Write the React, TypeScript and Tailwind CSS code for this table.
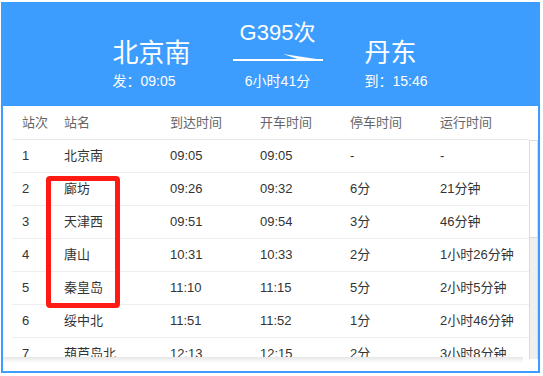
import React from "react";

const rows = [
  ["1", "北京南", "09:05", "09:05", "-", "-"],
  ["2", "廊坊", "09:26", "09:32", "6分", "21分钟"],
  ["3", "天津西", "09:51", "09:54", "3分", "46分钟"],
  ["4", "唐山", "10:31", "10:33", "2分", "1小时26分钟"],
  ["5", "秦皇岛", "11:10", "11:15", "5分", "2小时5分钟"],
  ["6", "绥中北", "11:51", "11:52", "1分", "2小时46分钟"],
  ["7", "葫芦岛北", "12:13", "12:15", "2分", "3小时8分钟"],
];

const widths = ["w-[42px]", "w-[106px]", "w-[90px]", "w-[90px]", "w-[90px]", "w-[99px]"];

export default function App() {
  return (
    <div
      className="relative w-[543px] h-[376px] bg-white overflow-hidden pt-[2px] pl-[1px]"
      style={{ fontFamily: '"Liberation Sans", "Noto Sans CJK SC", sans-serif' }}
    >
      <div className="w-[539px] h-[371px] border-l-[2px] border-r-[2px] border-b-[2px] border-[#3d9dfe] flex flex-col">
        {/* Header */}
        <div className="h-[104px] bg-[#3d9dfe] flex justify-center items-start text-white">
          <div className="w-[78px] mt-[36px] flex flex-col">
            <div className="text-[26px] leading-[30px]">北京南</div>
            <div className="text-[14px] leading-[18px] mt-[4px]">发：09:05</div>
          </div>
          <div className="w-[90px] ml-[42px] mt-[18px] flex flex-col items-center">
            <div className="text-[22px] leading-[26px]">G395次</div>
            <svg width="90" height="8" viewBox="0 0 90 8" className="mt-[8px]">
              <rect x="0" y="5" width="90" height="2" fill="#fff" />
              <polygon points="50,0 90,6 90,7 66,5.5" fill="#fff" />
            </svg>
            <div className="text-[14px] leading-[18px] mt-[10px]">6小时41分</div>
          </div>
          <div className="w-[64px] ml-[42px] mt-[36px] flex flex-col">
            <div className="text-[26px] leading-[30px]">丹东</div>
            <div className="text-[14px] leading-[18px] mt-[4px]">到：15:46</div>
          </div>
        </div>
        {/* Table */}
        <div className="flex-1 bg-white pl-[9px] flex flex-col">
          <div className="flex h-[34px] w-[517px] border-b border-[#e8e8e8] items-center text-[13px] text-[#666]">
            {["站次", "站名", "到达时间", "开车时间", "停车时间", "运行时间"].map((h, i) => (
              <div key={i} className={`${widths[i]} pl-[10px] shrink-0`}>
                {h}
              </div>
            ))}
          </div>
          <div className="flex h-[219px]">
            <div className="relative w-[517px] h-[219px]">
              <div className="w-[517px] h-[218px] overflow-hidden">
                {rows.map((r, ri) => (
                  <div key={ri} className="flex h-[33px] border-b border-[#eeeeee] items-center text-[13px] text-[#333]">
                    {r.map((c, i) => (
                      <div key={i} className={`${widths[i]} pl-[10px] shrink-0 whitespace-nowrap`}>
                        {c}
                      </div>
                    ))}
                  </div>
                ))}
              </div>
              <div className="absolute left-[-9px] top-[217px] w-[520px] h-[6px] bg-gradient-to-b from-[#e6e6e6] to-white" />
            </div>
            <div className="w-[9px] h-[219px] flex flex-col border-l border-t border-r border-[#dcdcdc] bg-[#f0f0f0]">
              <div className="h-[97px] bg-white border-b border-[#dcdcdc]" />
            </div>
          </div>
        </div>
      </div>
      {/* Red highlight */}
      <div className="absolute left-[46px] top-[176px] w-[74px] h-[132px] border-[5px] border-[#ff1a14] rounded-[4px]" />
    </div>
  );
}
